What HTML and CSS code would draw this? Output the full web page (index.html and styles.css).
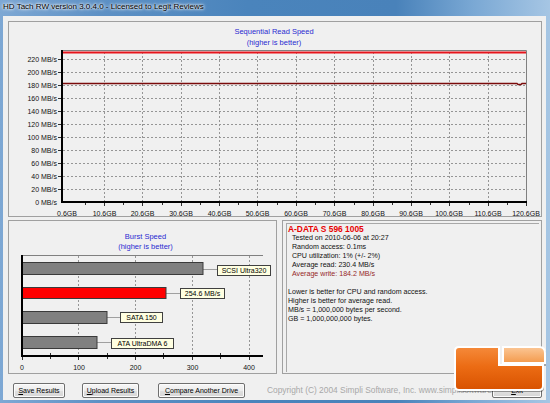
FILE: index.html
```html
<!DOCTYPE html>
<html>
<head>
<meta charset="utf-8">
<title>HD Tach RW</title>
<link rel="stylesheet" href="styles.css">
</head>
<body>
<div class="window">
  <div class="titlebar"><span class="title">HD Tach RW version 3.0.4.0 - Licensed to Legit Reviews</span></div>
  <div class="client">
    <div class="panel top-panel">
      <svg class="chart" width="532" height="194" viewBox="9 22 532 194">
        <text class="ttl" x="274" y="34" text-anchor="middle">Sequential Read Speed</text>
        <text class="ttl" x="274" y="45" text-anchor="middle">(higher is better)</text>
        <g class="grid">
          <line x1="63" y1="189.5" x2="526" y2="189.5"/>
          <line x1="63" y1="176.5" x2="526" y2="176.5"/>
          <line x1="63" y1="163.5" x2="526" y2="163.5"/>
          <line x1="63" y1="150.5" x2="526" y2="150.5"/>
          <line x1="63" y1="137.5" x2="526" y2="137.5"/>
          <line x1="63" y1="124.5" x2="526" y2="124.5"/>
          <line x1="63" y1="111.5" x2="526" y2="111.5"/>
          <line x1="63" y1="98.5" x2="526" y2="98.5"/>
          <line x1="63" y1="85.5" x2="526" y2="85.5"/>
          <line x1="63" y1="72.5" x2="526" y2="72.5"/>
          <line x1="63" y1="59.5" x2="526" y2="59.5"/>
          <line x1="104.5" y1="52" x2="104.5" y2="201"/>
          <line x1="142.5" y1="52" x2="142.5" y2="201"/>
          <line x1="181.5" y1="52" x2="181.5" y2="201"/>
          <line x1="219.5" y1="52" x2="219.5" y2="201"/>
          <line x1="257.5" y1="52" x2="257.5" y2="201"/>
          <line x1="296.5" y1="52" x2="296.5" y2="201"/>
          <line x1="334.5" y1="52" x2="334.5" y2="201"/>
          <line x1="373.5" y1="52" x2="373.5" y2="201"/>
          <line x1="411.5" y1="52" x2="411.5" y2="201"/>
          <line x1="449.5" y1="52" x2="449.5" y2="201"/>
          <line x1="488.5" y1="52" x2="488.5" y2="201"/>
        </g>
        <g class="ticks">
          <line x1="58" y1="189.5" x2="62" y2="189.5"/>
          <line x1="58" y1="176.5" x2="62" y2="176.5"/>
          <line x1="58" y1="163.5" x2="62" y2="163.5"/>
          <line x1="58" y1="150.5" x2="62" y2="150.5"/>
          <line x1="58" y1="137.5" x2="62" y2="137.5"/>
          <line x1="58" y1="124.5" x2="62" y2="124.5"/>
          <line x1="58" y1="111.5" x2="62" y2="111.5"/>
          <line x1="58" y1="98.5" x2="62" y2="98.5"/>
          <line x1="58" y1="85.5" x2="62" y2="85.5"/>
          <line x1="58" y1="72.5" x2="62" y2="72.5"/>
          <line x1="58" y1="59.5" x2="62" y2="59.5"/>
          <line x1="104.5" y1="203" x2="104.5" y2="206"/>
          <line x1="142.5" y1="203" x2="142.5" y2="206"/>
          <line x1="181.5" y1="203" x2="181.5" y2="206"/>
          <line x1="219.5" y1="203" x2="219.5" y2="206"/>
          <line x1="257.5" y1="203" x2="257.5" y2="206"/>
          <line x1="296.5" y1="203" x2="296.5" y2="206"/>
          <line x1="334.5" y1="203" x2="334.5" y2="206"/>
          <line x1="373.5" y1="203" x2="373.5" y2="206"/>
          <line x1="411.5" y1="203" x2="411.5" y2="206"/>
          <line x1="449.5" y1="203" x2="449.5" y2="206"/>
          <line x1="488.5" y1="203" x2="488.5" y2="206"/>
          <line x1="526.5" y1="203" x2="526.5" y2="206"/>
          <line x1="85.5" y1="203" x2="85.5" y2="205"/>
          <line x1="123.5" y1="203" x2="123.5" y2="205"/>
          <line x1="162.5" y1="203" x2="162.5" y2="205"/>
          <line x1="200.5" y1="203" x2="200.5" y2="205"/>
          <line x1="238.5" y1="203" x2="238.5" y2="205"/>
          <line x1="277.5" y1="203" x2="277.5" y2="205"/>
          <line x1="315.5" y1="203" x2="315.5" y2="205"/>
          <line x1="354.5" y1="203" x2="354.5" y2="205"/>
          <line x1="392.5" y1="203" x2="392.5" y2="205"/>
          <line x1="430.5" y1="203" x2="430.5" y2="205"/>
          <line x1="469.5" y1="203" x2="469.5" y2="205"/>
          <line x1="507.5" y1="203" x2="507.5" y2="205"/>
        </g>
        <line class="frame" x1="62" y1="50.5" x2="526.5" y2="50.5"/>
        <line class="frame" x1="526.5" y1="50.5" x2="526.5" y2="202"/>
        <line class="axis" x1="62" y1="50" x2="62" y2="203"/>
        <line class="axis" x1="61" y1="202" x2="527" y2="202"/>
        <line class="read" x1="63" y1="52.5" x2="526" y2="52.5"/>
        <polyline class="write" points="63,83.5 517,83.5 518,84.5 521,84.5 522,83.5 526,83.5"/>
        <g class="ylab">
          <text x="57" y="62">220 MB/s</text>
          <text x="57" y="75">200 MB/s</text>
          <text x="57" y="88">180 MB/s</text>
          <text x="57" y="101">160 MB/s</text>
          <text x="57" y="114">140 MB/s</text>
          <text x="57" y="127">120 MB/s</text>
          <text x="57" y="140">100 MB/s</text>
          <text x="57" y="153">80 MB/s</text>
          <text x="57" y="166">60 MB/s</text>
          <text x="57" y="179">40 MB/s</text>
          <text x="57" y="192">20 MB/s</text>
          <text x="57" y="205">0 MB/s</text>
        </g>
        <g class="xlab">
          <text x="67" y="215.5">0.6GB</text>
          <text x="104.5" y="215.5">10.6GB</text>
          <text x="142.5" y="215.5">20.6GB</text>
          <text x="181" y="215.5">30.6GB</text>
          <text x="219.5" y="215.5">40.6GB</text>
          <text x="257.5" y="215.5">50.6GB</text>
          <text x="296" y="215.5">60.6GB</text>
          <text x="334.5" y="215.5">70.6GB</text>
          <text x="373" y="215.5">80.6GB</text>
          <text x="411" y="215.5">90.6GB</text>
          <text x="449" y="215.5">100.6GB</text>
          <text x="488" y="215.5">110.6GB</text>
          <text x="526" y="215.5">120.6GB</text>
        </g>
      </svg>
    </div>
    <div class="bottom-row">
      <div class="panel burst-panel">
        <svg class="chart" width="267" height="152" viewBox="9 221 267 152">
          <text class="ttl" x="145.5" y="239" text-anchor="middle">Burst Speed</text>
          <text class="ttl" x="145.5" y="249" text-anchor="middle">(higher is better)</text>
          <g class="grid">
            <line x1="78.5" y1="256" x2="78.5" y2="355"/>
            <line x1="135.5" y1="256" x2="135.5" y2="355"/>
            <line x1="192.5" y1="256" x2="192.5" y2="355"/>
            <line x1="249.5" y1="256" x2="249.5" y2="355"/>
          </g>
          <g class="ticks">
            <line x1="50.5" y1="353" x2="50.5" y2="355"/>
            <line x1="107.5" y1="353" x2="107.5" y2="355"/>
            <line x1="163.5" y1="353" x2="163.5" y2="355"/>
            <line x1="220.5" y1="353" x2="220.5" y2="355"/>
            <line x1="22.5" y1="357" x2="22.5" y2="360"/>
            <line x1="78.5" y1="357" x2="78.5" y2="360"/>
            <line x1="135.5" y1="357" x2="135.5" y2="360"/>
            <line x1="192.5" y1="357" x2="192.5" y2="360"/>
            <line x1="249.5" y1="357" x2="249.5" y2="360"/>
            <line x1="50.5" y1="357" x2="50.5" y2="359"/>
            <line x1="107.5" y1="357" x2="107.5" y2="359"/>
            <line x1="163.5" y1="357" x2="163.5" y2="359"/>
            <line x1="220.5" y1="357" x2="220.5" y2="359"/>
          </g>
          <line class="frame" x1="22" y1="255.5" x2="263" y2="255.5"/>
          <g class="conn">
            <line x1="203" y1="269.5" x2="217" y2="269.5"/>
            <line x1="166" y1="293.5" x2="180" y2="293.5"/>
            <line x1="107" y1="317.5" x2="120" y2="317.5"/>
            <line x1="97" y1="342.5" x2="111" y2="342.5"/>
          </g>
          <rect class="bar" x="22.5" y="262.5" width="180.5" height="12"/>
          <rect class="bar red" x="22.5" y="287.5" width="143.5" height="11"/>
          <rect class="bar" x="22.5" y="311.5" width="84.5" height="12"/>
          <rect class="bar" x="22.5" y="336.5" width="74.5" height="12"/>
          <line class="axis" x1="22" y1="255" x2="22" y2="357"/>
          <line class="axis" x1="21" y1="356" x2="263" y2="356"/>
          <g class="lbl">
            <rect x="217.5" y="265.5" width="53" height="10"/>
            <text x="244" y="273">SCSI Ultra320</text>
            <rect x="180.5" y="288.5" width="44" height="10"/>
            <text x="202.5" y="296">254.6 MB/s</text>
            <rect x="120.5" y="312.5" width="42" height="10"/>
            <text x="141.5" y="320">SATA 150</text>
            <rect x="111.5" y="338.5" width="62" height="10"/>
            <text x="142.5" y="346">ATA UltraDMA 6</text>
          </g>
          <g class="xlab">
            <text x="22" y="369.5">0</text>
            <text x="79" y="369.5">100</text>
            <text x="135.5" y="369.5">200</text>
            <text x="192.5" y="369.5">300</text>
            <text x="249" y="369.5">400</text>
          </g>
        </svg>
      </div>
      <div class="panel info-panel">
        <div class="info-text">
          <div class="drive">A-DATA S 596 1005</div>
          <div class="ind">Tested on 2010-06-06 at 20:27</div>
          <div class="ind">Random access: 0.1ms</div>
          <div class="ind">CPU utilization: 1% (+/- 2%)</div>
          <div class="ind">Average read: 230.4 MB/s</div>
          <div class="ind write">Average write: 184.2 MB/s</div>
          <div class="blank"></div>
          <div>Lower is better for CPU and random access.</div>
          <div>Higher is better for average read.</div>
          <div>MB/s = 1,000,000 bytes per second.</div>
          <div>GB = 1,000,000,000 bytes.</div>
        </div>
      </div>
    </div>
    <div class="button-row">
      <button class="btn btn-save"><u>S</u>ave Results</button>
      <button class="btn btn-upload"><u>U</u>pload Results</button>
      <button class="btn btn-compare"><u>C</u>ompare Another Drive</button>
      <span class="copyright">Copyright (C) 2004 Simpli Software, Inc. www.simplisoftware.com</span>
      <button class="btn btn-exit"><u>E</u>xit</button>
    </div>
  </div>
  <svg class="logo" width="98" height="52" viewBox="452 344 98 52">
    <defs>
      <linearGradient id="lgDark" x1="0" y1="0" x2="0" y2="1">
        <stop offset="0" stop-color="#f58a3a"/>
        <stop offset="0.45" stop-color="#ec6c14"/>
        <stop offset="1" stop-color="#d85200"/>
      </linearGradient>
      <linearGradient id="lgLight" x1="0" y1="0" x2="0" y2="1">
        <stop offset="0" stop-color="#fbc796"/>
        <stop offset="1" stop-color="#f39a4c"/>
      </linearGradient>
    </defs>
    <path d="M456,352 q0,-4 4,-4 H500 V366 H544 V388 q0,4 -4,4 H460 q-4,0 -4,-4 Z" fill="rgba(0,0,0,0.35)"/>
    <path d="M504,348 H540 q6,0 6,6 V366 H504 Z" fill="rgba(0,0,0,0.3)"/>
    <path class="lg-dark" d="M455,351 q0,-4 4,-4 H499 V365 H543 V386 q0,4 -4,4 H459 q-4,0 -4,-4 Z" fill="url(#lgDark)"/>
    <path class="lg-light" d="M503,347 H539 q6,0 6,6 V363 H503 Z" fill="url(#lgLight)"/>
  </svg>
</div>
</body>
</html>
```
FILE: styles.css
```css
* { box-sizing: border-box; }
html, body { margin: 0; padding: 0; }
body {
  width: 550px;
  height: 403px;
  overflow: hidden;
  font-family: "Liberation Sans", Arial, sans-serif;
  background: #5a8cc0;
}
.window {
  position: relative;
  width: 550px;
  height: 403px;
  display: flex;
  flex-direction: column;
  background: linear-gradient(to right, #7ea8d4 0%, #5e91c5 18%, #4a84bc 45%, #4982ba 72%, #7aa8d4 86%, #a6c6e4 100%);
}
.titlebar {
  height: 16px;
  flex: none;
  padding-left: 3px;
  font-size: 8px;
  line-height: 14px;
  color: #000;
}
.title {
  text-shadow: 0 0 4px #fff, 0 0 3px #fff, 0 0 2px rgba(255,255,255,0.8);
}
.client {
  flex: 1;
  margin: 0 4px 3px 3px;
  background: #f0f0f0;
  padding: 5px 4px 0 5px;
  display: flex;
  flex-direction: column;
}
.panel {
  border: 1px solid #a0a0a0;
  background: #f0f0f0;
}
.top-panel {
  height: 196px;
  flex: none;
}
.chart { display: block; }
.bottom-row {
  display: flex;
  gap: 5px;
  margin-top: 3px;
  height: 154px;
  flex: none;
}
.burst-panel { width: 269px; flex: none; }
.info-panel {
  flex: 1;
  padding: 2px 2px 1px 3px;
}
.info-text {
  height: 100%;
  border-top: 1px solid #a8a8a8;
  border-left: 1px solid #a8a8a8;
  padding: 1px 0 0 1px;
  font-size: 7.1px;
  line-height: 9px;
  color: #111;
  white-space: nowrap;
}
.info-text .drive {
  color: #e80000;
  font-weight: bold;
  font-size: 8.4px;
}
.info-text .ind { padding-left: 4px; }
.info-text .write { color: #962828; }
.info-text .blank { height: 9px; }

.ttl { font-size: 7.5px; fill: #2a2ad0; font-family: "Liberation Sans", Arial, sans-serif; }
.grid line { stroke: #959595; stroke-width: 1; stroke-dasharray: 2 2; }
.ticks line { stroke: #303030; stroke-width: 1; }
.frame { stroke: #808080; stroke-width: 1; }
.axis { stroke: #000; stroke-width: 2; }
.read { stroke: #e5141c; stroke-width: 2; }
.write { stroke: #7a0a0a; stroke-width: 1.4; fill: none; }
.ylab text { font-size: 7px; fill: #111; text-anchor: end; font-family: "Liberation Sans", Arial, sans-serif; }
.xlab text { font-size: 7px; fill: #111; text-anchor: middle; font-family: "Liberation Sans", Arial, sans-serif; }
.bar { fill: #808080; stroke: #3a3a3a; stroke-width: 1; }
.bar.red { fill: #ff0000; }
.conn line { stroke: #a0a0a0; stroke-width: 1; }
.lbl rect { fill: #ffffe1; stroke: #404040; stroke-width: 1; }
.lbl text { font-size: 7px; fill: #000; text-anchor: middle; font-family: "Liberation Sans", Arial, sans-serif; }

.button-row {
  flex: 1;
  display: flex;
  align-items: flex-start;
  padding-top: 9px;
}
.btn {
  flex: none;
  height: 15px;
  padding: 0;
  font-family: "Liberation Sans", Arial, sans-serif;
  font-size: 7px;
  color: #000;
  background: linear-gradient(#f7f7f7, #ececec 50%, #e0e0e0 51%, #d6d6d6);
  border: 1px solid #6f6f6f;
  border-radius: 2px;
  box-shadow: inset 0 0 0 1px #fcfcfc;
  line-height: 12px;
}
.btn-save { width: 52px; margin-left: 5px; }
.btn-upload { width: 57px; margin-left: 17px; }
.btn-compare { width: 87px; margin-left: 19px; }
.copyright {
  flex: 1;
  min-width: 0;
  overflow: hidden;
  white-space: nowrap;
  margin-left: 22px;
  font-size: 8.4px;
  line-height: 15px;
  color: #a8a8a8;
}
.btn-exit { width: 50px; margin-right: 0; }
.logo {
  position: absolute;
  left: 452px;
  top: 344px;
}
.lg-dark, .lg-light { stroke: #fff; stroke-width: 2; }
```
